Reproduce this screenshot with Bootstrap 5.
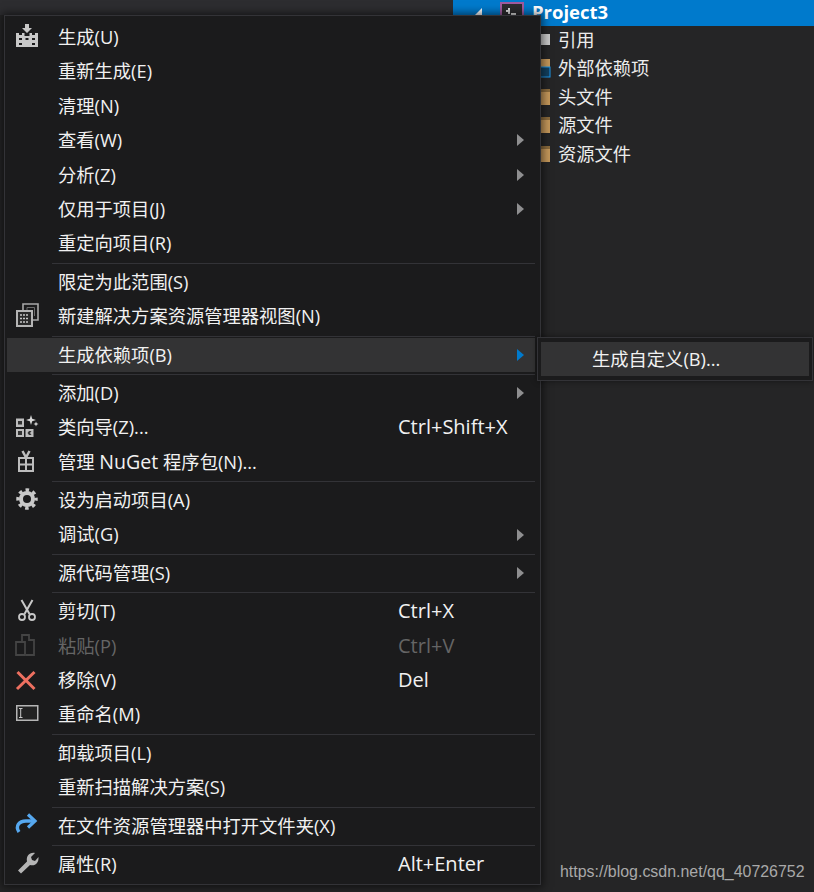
<!DOCTYPE html>
<html lang="zh">
<head>
<meta charset="utf-8">
<title>Context menu</title>
<link rel="stylesheet" href="https://cdn.jsdelivr.net/npm/bootstrap@5.3.0/dist/css/bootstrap.min.css">
<style>
html,body{height:892px;overflow:hidden;margin:0}
body{background:#252526;font-family:"Open Sans","Noto Sans CJK SC",sans-serif;color:#f1f1f1;position:relative}
.ide-top{height:25.5px}
.ide-strip{width:453px;height:15px;background:#2d2d30;flex:none}
.ide-sel{background:#007acc;height:25.5px;color:#fff;font-weight:700;font-size:18.5px;line-height:25px;padding-left:19px;gap:8px;flex:1}
.ide-sel svg{flex:none}
.ide-sel span{margin-bottom:3px}
.ide-twist{margin-right:8px}
.ide-tree{padding-left:535px}
.ide-row{height:28.5px;font-size:18.3px;line-height:28.5px;color:#ececec;gap:7px}
.ide-row svg{flex:none}
.ctx{position:absolute;left:4px;top:15px;width:537px;height:870px;background:#1b1b1c;border:1px solid #333337;box-shadow:0 0 8px 2px rgba(0,0,0,.55);padding:4px 5px 0 2px;list-style:none;margin:0}
.ctx-row{height:34.4px;font-size:18.3px;line-height:34.4px;color:#f1f1f1;white-space:nowrap}
.ctx-ico{width:51px;flex:none;padding-left:7px;padding-right:18px}
.ctx-ico svg{display:block}
.ctx-lbl{width:340px;flex:none}
.ctx-lat{font-size:19.6px}
.ctx-key{flex:1;font-size:20px}
.ctx-arrow{width:0;height:0;border-left:7px solid #8f8f90;border-top:6px solid transparent;border-bottom:6px solid transparent;margin-right:11px;flex:none}
.ctx-sep{height:1px;background:#333337;margin:2px 0 1px 45px;list-style:none}
.ctx-dim{color:#656565}
.ctx-hot{background:#333334}
.ctx-hot .ctx-arrow{border-left-color:#007acc}
.ctx-sub{position:absolute;left:537px;top:337px;width:276px;height:44px;background:#1b1b1c;border:1px solid #333337;padding:4px 3px;box-shadow:0 0 6px rgba(0,0,0,.45)}
.ctx-subitem{height:34px;background:#333334;line-height:34px;padding-left:51px;font-size:18.3px;color:#f1f1f1}
.ide-mark{position:absolute;left:560px;top:862px;font-family:"Liberation Sans",sans-serif;font-size:15.95px;line-height:20px;color:#a9a9a9}
</style>
</head>
<body>
<div class="ide-top d-flex align-items-start">
  <div class="ide-strip"></div>
  <div class="ide-sel d-flex align-items-center">
    <svg class="ide-twist" width="12" height="12" viewBox="0 0 12 12"><path d="M10 1v9H1z" fill="#fff"/></svg>
    <svg width="24" height="22" viewBox="0 0 24 22"><rect x="1" y="1" width="22" height="20" fill="#2b2b2e" stroke="#a05a9e" stroke-width="2"/><path d="M6 8h4v2H6zM11 11h5v2h-5zM8 6h2v6H8z" fill="#ddd"/></svg>
    <span>Project3</span>
  </div>
</div>
<div class="ide-tree">
  <div class="ide-row d-flex align-items-center"><svg width="16" height="14" viewBox="0 0 16 14"><rect x="5" y="1" width="10" height="11" fill="#c8c8c8"/></svg><span>引用</span></div>
  <div class="ide-row d-flex align-items-center"><svg width="16" height="20" viewBox="0 0 16 20"><path d="M5 1h10v18H5z" fill="#c4975a"/><rect x="5" y="9" width="10" height="10" fill="#123f5e" stroke="#1c97ea"/></svg><span>外部依赖项</span></div>
  <div class="ide-row d-flex align-items-center"><svg width="16" height="20" viewBox="0 0 16 20"><path d="M5 2h10v16H5z" fill="#c4975a"/><path d="M5 2h10v3H5z" fill="#8a6a3c"/></svg><span>头文件</span></div>
  <div class="ide-row d-flex align-items-center"><svg width="16" height="20" viewBox="0 0 16 20"><path d="M5 2h10v16H5z" fill="#c4975a"/><path d="M5 2h10v3H5z" fill="#8a6a3c"/></svg><span>源文件</span></div>
  <div class="ide-row d-flex align-items-center"><svg width="16" height="20" viewBox="0 0 16 20"><path d="M5 2h10v16H5z" fill="#c4975a"/><path d="M5 2h10v3H5z" fill="#8a6a3c"/></svg><span>资源文件</span></div>
</div>

<ul class="ctx">
  <li class="ctx-row d-flex align-items-center"><span class="ctx-ico"><svg width="26" height="26" viewBox="0 0 26 26"><path d="M11 0h4v4h3l-5 5-5-5h3z" fill="#c8c8c8"/><path d="M2 9h3v2h3V9h2.500v3h5V9H18v2h3V9h3v14H2z" fill="#c8c8c8"/><path d="M5 14h3v2H5zM11.500 14h3v2h-3zM18 14h3v2h-3zM5 19h3v2H5zM18 19h3v2h-3z" fill="#1b1b1c"/></svg></span><span class="ctx-lbl">生成(U)</span></li>
  <li class="ctx-row d-flex align-items-center"><span class="ctx-ico"></span><span class="ctx-lbl">重新生成(E)</span></li>
  <li class="ctx-row d-flex align-items-center"><span class="ctx-ico"></span><span class="ctx-lbl">清理(N)</span></li>
  <li class="ctx-row d-flex align-items-center"><span class="ctx-ico"></span><span class="ctx-lbl">查看(W)</span><span class="ctx-key"></span><span class="ctx-arrow"></span></li>
  <li class="ctx-row d-flex align-items-center"><span class="ctx-ico"></span><span class="ctx-lbl">分析(Z)</span><span class="ctx-key"></span><span class="ctx-arrow"></span></li>
  <li class="ctx-row d-flex align-items-center"><span class="ctx-ico"></span><span class="ctx-lbl">仅用于项目(J)</span><span class="ctx-key"></span><span class="ctx-arrow"></span></li>
  <li class="ctx-row d-flex align-items-center"><span class="ctx-ico"></span><span class="ctx-lbl">重定向项目(R)</span></li>
  <li class="ctx-sep"></li>
  <li class="ctx-row d-flex align-items-center"><span class="ctx-ico"></span><span class="ctx-lbl">限定为此范围(S)</span></li>
  <li class="ctx-row d-flex align-items-center"><span class="ctx-ico"><svg width="26" height="26" viewBox="0 0 26 26"><path d="M9 7V1h15v16h-5" fill="none" stroke="#a8a8a8" stroke-width="1.600"/><path d="M13 7V4.500h7.500V13" fill="none" stroke="#6c6c6c" stroke-width="1"/><rect x="3" y="8" width="15" height="15" fill="#2a2a2a" stroke="#b5b5b5" stroke-width="2"/><path d="M6 12h9M6 15.500h9M6 19h9" stroke="#c8c8c8" stroke-width="1.500" stroke-dasharray="2 1"/></svg></span><span class="ctx-lbl">新建解决方案资源管理器视图(N)</span></li>
  <li class="ctx-sep"></li>
  <li class="ctx-row ctx-hot d-flex align-items-center"><span class="ctx-ico"></span><span class="ctx-lbl">生成依赖项(B)</span><span class="ctx-key"></span><span class="ctx-arrow"></span></li>
  <li class="ctx-sep"></li>
  <li class="ctx-row d-flex align-items-center"><span class="ctx-ico"></span><span class="ctx-lbl">添加(D)</span><span class="ctx-key"></span><span class="ctx-arrow"></span></li>
  <li class="ctx-row d-flex align-items-center"><span class="ctx-ico"><svg width="26" height="26" viewBox="0 0 26 26"><rect x="2" y="4.500" width="8" height="8.500" fill="#bdbdbd"/><rect x="2" y="15" width="8" height="8" fill="#bdbdbd"/><rect x="11.500" y="15" width="8" height="8" fill="#bdbdbd"/><path d="M4 7h4v3.500H4zM4 17h4v4H4zM15 17l-1.500 2 1.500 2h2.500l-1.500-2 1.500-2z" fill="#333"/><path d="M17 1l1.200 3.800L22 6l-3.800 1.200L17 11l-1.200-3.800L12 6l3.800-1.200zM22 7.500l.7 1.800 1.800.7-1.800.7-.7 1.800-.7-1.800-1.800-.7 1.800-.7z" fill="#d8d8d8"/></svg></span><span class="ctx-lbl">类向导(Z)...</span><span class="ctx-key">Ctrl+Shift+X</span></li>
  <li class="ctx-row d-flex align-items-center"><span class="ctx-ico"><svg width="26" height="26" viewBox="0 0 26 26"><rect x="5" y="9" width="14" height="13" fill="none" stroke="#bdbdbd" stroke-width="2"/><path d="M5 15.500h14M12 9v13" stroke="#bdbdbd" stroke-width="2"/><path d="M12 8.500L8.500 2M12 8.500L15.500 2" stroke="#bdbdbd" stroke-width="2.500"/></svg></span><span class="ctx-lbl">管理 <span class="ctx-lat">NuGet</span> 程序包(N)...</span></li>
  <li class="ctx-sep"></li>
  <li class="ctx-row d-flex align-items-center"><span class="ctx-ico"><svg width="26" height="26" viewBox="0 0 26 26"><circle cx="13" cy="12" r="6" fill="none" stroke="#c8c8c8" stroke-width="4"/><circle cx="13" cy="12" r="9" fill="none" stroke="#c8c8c8" stroke-width="3.500" stroke-dasharray="3.500 3.570" stroke-dashoffset="1.750"/></svg></span><span class="ctx-lbl">设为启动项目(A)</span></li>
  <li class="ctx-row d-flex align-items-center"><span class="ctx-ico"></span><span class="ctx-lbl">调试(G)</span><span class="ctx-key"></span><span class="ctx-arrow"></span></li>
  <li class="ctx-sep"></li>
  <li class="ctx-row d-flex align-items-center"><span class="ctx-ico"></span><span class="ctx-lbl">源代码管理(S)</span><span class="ctx-key"></span><span class="ctx-arrow"></span></li>
  <li class="ctx-sep"></li>
  <li class="ctx-row d-flex align-items-center"><span class="ctx-ico"><svg width="26" height="26" viewBox="0 0 26 26"><path d="M7.500 2L15.500 16M18.500 2L10.500 16" stroke="#c8c8c8" stroke-width="2" fill="none"/><circle cx="8" cy="19" r="3" fill="none" stroke="#c8c8c8" stroke-width="1.800"/><circle cx="18" cy="19" r="3" fill="none" stroke="#c8c8c8" stroke-width="1.800"/></svg></span><span class="ctx-lbl">剪切(T)</span><span class="ctx-key">Ctrl+X</span></li>
  <li class="ctx-row d-flex align-items-center ctx-dim"><span class="ctx-ico"><svg width="26" height="26" viewBox="0 0 26 26"><path d="M2 9h9v13H2zM8 9V2h7v6M15 7h5v15h-8" fill="none" stroke="#444" stroke-width="1.800"/></svg></span><span class="ctx-lbl">粘贴(P)</span><span class="ctx-key">Ctrl+V</span></li>
  <li class="ctx-row d-flex align-items-center"><span class="ctx-ico"><svg width="26" height="26" viewBox="0 0 26 26"><path d="M3.500 5l17 17M20.500 5L3 22" stroke="#ee7060" stroke-width="3" fill="none"/></svg></span><span class="ctx-lbl">移除(V)</span><span class="ctx-key">Del</span></li>
  <li class="ctx-row d-flex align-items-center"><span class="ctx-ico"><svg width="26" height="26" viewBox="0 0 26 26"><rect x="2.750" y="3.750" width="21" height="14.500" fill="#222" stroke="#b5b5b5" stroke-width="1.500"/><path d="M5 6.500h3.500M5 15.500h3.500M6.700 6.500v9" stroke="#c8c8c8" stroke-width="1"/></svg></span><span class="ctx-lbl">重命名(M)</span></li>
  <li class="ctx-sep"></li>
  <li class="ctx-row d-flex align-items-center"><span class="ctx-ico"></span><span class="ctx-lbl">卸载项目(L)</span></li>
  <li class="ctx-row d-flex align-items-center"><span class="ctx-ico"></span><span class="ctx-lbl">重新扫描解决方案(S)</span></li>
  <li class="ctx-sep"></li>
  <li class="ctx-row d-flex align-items-center"><span class="ctx-ico"><svg width="26" height="26" viewBox="0 0 26 26"><path d="M5 19C1 13 5 8 12 8H20" fill="none" stroke="#56a8ef" stroke-width="3.400"/><path d="M14 1.500L21 8l-7 6.500" fill="none" stroke="#56a8ef" stroke-width="3.200"/></svg></span><span class="ctx-lbl">在文件资源管理器中打开文件夹(X)</span></li>
  <li class="ctx-sep"></li>
  <li class="ctx-row d-flex align-items-center"><span class="ctx-ico"><svg width="26" height="26" viewBox="0 0 26 26"><path d="M4 19.500L13 10.500C12 5 15.500 1 21 2L17 6L18 9L21 10L24.500 6C25 12 21 15.500 16 14L7 22.500Z" fill="#b5b5b5"/></svg></span><span class="ctx-lbl">属性(R)</span><span class="ctx-key">Alt+Enter</span></li>
</ul>
<div class="ctx-sub"><div class="ctx-subitem">生成自定义(B)...</div></div>
<div class="ide-mark">https://blog.csdn.net/qq_40726752</div>
<script src="https://cdn.jsdelivr.net/npm/bootstrap@5.3.0/dist/js/bootstrap.bundle.min.js"></script>
</body>
</html>
